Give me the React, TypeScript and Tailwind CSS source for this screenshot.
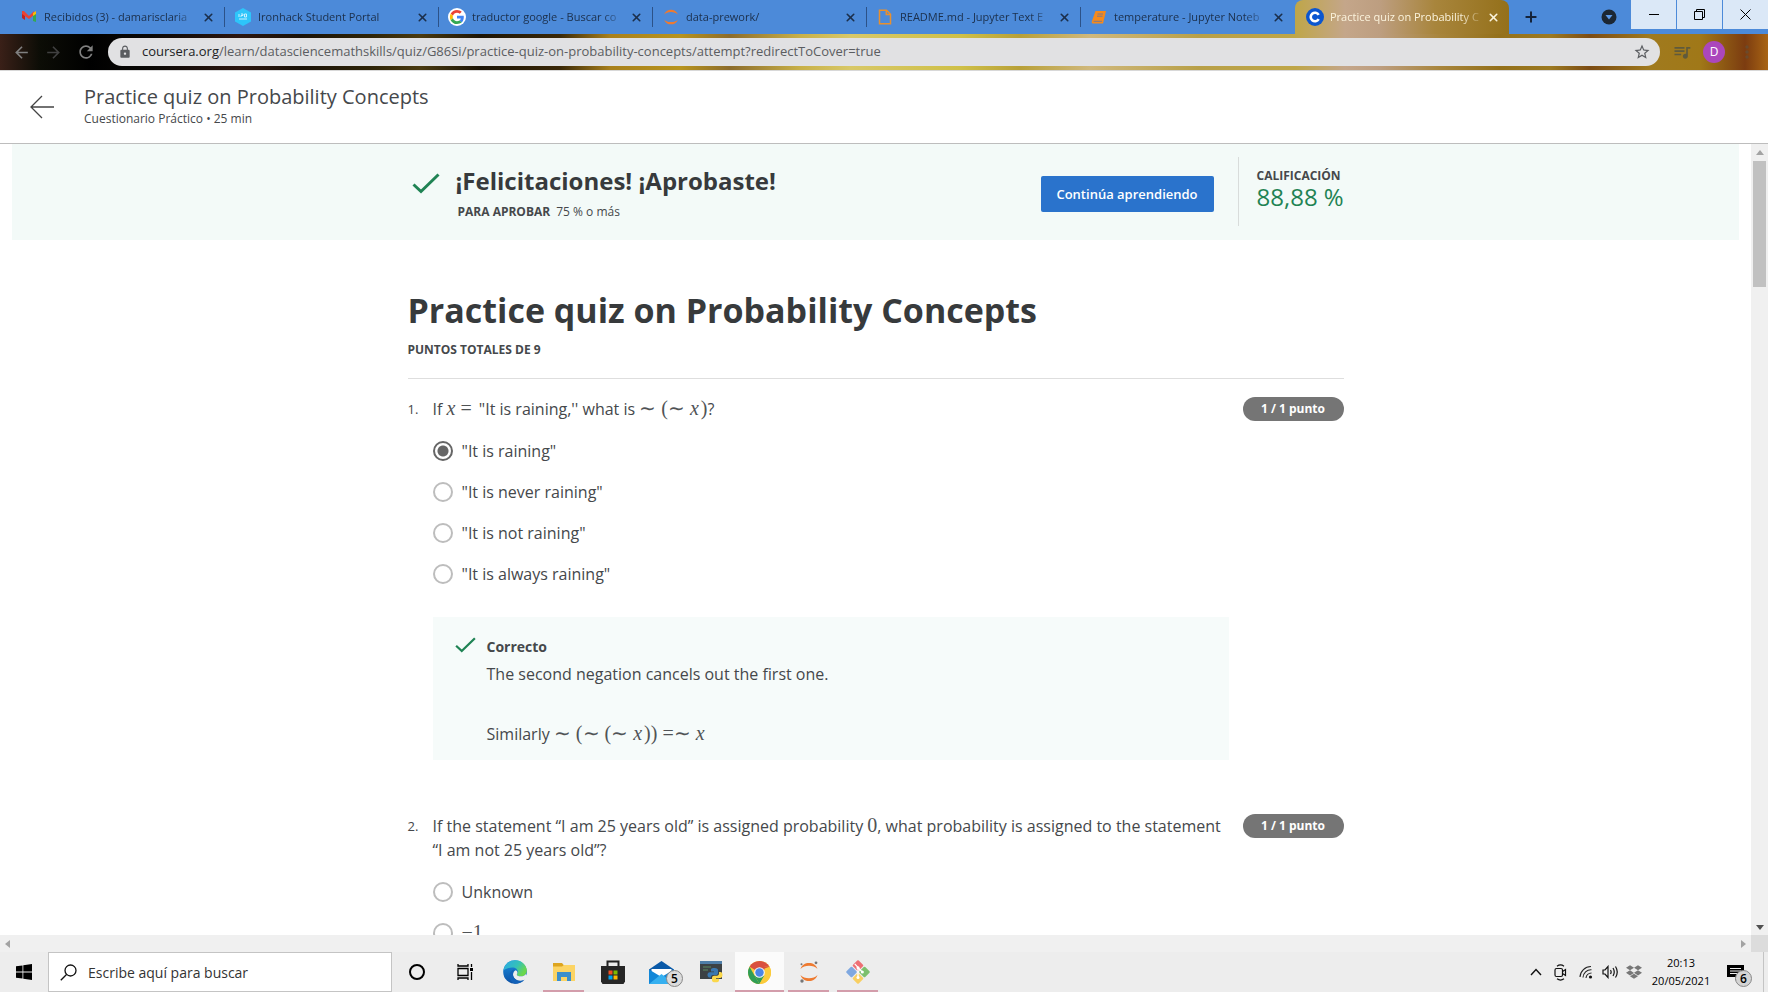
import type { ReactNode } from "react";
import { X, Plus } from "lucide-react";
import { MdLock, MdRefresh, MdStarBorder, MdQueueMusic, MdMoreVert, MdArrowBack, MdArrowForward } from "react-icons/md";
import { FaDropbox } from "react-icons/fa";

const photo =
  "bg-[linear-gradient(90deg,#3a2018_0px,#0c0d06_40px,#000000_90px,#0a0806_150px,#2c1610_240px,#1a1208_300px,#2e2408_370px,#4a3a10_420px,#1c1406_480px,#3a2808_560px,#a8801c_610px,#b8941e_680px,#8c6c2c_730px,#c8b048_800px,#d8c868_850px,#cfc048_960px,#b8a038_1020px,#d0b87c_1090px,#b8a048_1200px,#bfa648_1295px,#c4a68a_1345px,#bd9e80_1380px,#a8853c_1440px,#94701a_1500px,#9c7a22_1550px,#7c4c14_1590px,#a07a1e_1650px,#a07818_1700px,#7c3c10_1745px,#a86414_1768px)]";

function Gmail() {
  return (
    <svg width="16" height="14" viewBox="0 0 16 14">
      <path d="M1 2 4 4v6L1 8z" fill="#c5221f" />
      <path d="M1 1h2l5 5 5-5v4l-5 4-7-5z" fill="#ea4335" />
      <path d="M12 3 15 1v4l-3 2z" fill="#fbbc04" />
      <path d="M12 6 15 4v8l-3-1z" fill="#34a853" />
    </svg>
  );
}
function Ironhack() {
  return (
    <svg width="18" height="18" viewBox="0 0 18 18">
      <path d="M9 0l8 4.500v9L9 18l-8-4.500v-9z" fill="#2dc5fa" />
      <path d="M5 6v3M7 6h2v1.500H7V9M10.500 6h2v3h-2zM5 11h8" stroke="#c8f0ff" strokeWidth="1" fill="none" />
    </svg>
  );
}
function Google() {
  return (
    <svg width="18" height="18" viewBox="0 0 48 48">
      <circle cx="24" cy="24" r="24" fill="#fff" />
      <g transform="translate(5 5) scale(.79)">
        <path fill="#EA4335" d="M24 9.500c3.540 0 6.710 1.220 9.210 3.600l6.850-6.850C35.900 2.380 30.470 0 24 0 14.620 0 6.510 5.380 2.560 13.220l7.980 6.190C12.430 13.720 17.740 9.500 24 9.500z" />
        <path fill="#4285F4" d="M46.980 24.550c0-1.570-.15-3.090-.38-4.550H24v9.020h12.940c-.58 2.960-2.260 5.480-4.780 7.180l7.730 6c4.510-4.180 7.090-10.360 7.090-17.650z" />
        <path fill="#FBBC05" d="M10.530 28.590c-.48-1.450-.76-2.990-.76-4.590s.27-3.140.76-4.590l-7.980-6.190C.92 16.460 0 20.120 0 24c0 3.880.92 7.540 2.560 10.780l7.970-6.190z" />
        <path fill="#34A853" d="M24 48c6.480 0 11.930-2.130 15.890-5.810l-7.730-6c-2.150 1.450-4.920 2.300-8.160 2.300-6.260 0-11.570-4.220-13.470-9.910l-7.980 6.190C6.510 42.620 14.620 48 24 48z" />
      </g>
    </svg>
  );
}
function Jupyter({ dots = false }: { dots?: boolean }) {
  return (
    <svg width={dots ? 22 : 18} height={dots ? 22 : 18} viewBox="0 0 22 22">
      <path d="M2.500 8C4 3.800 7 2 11 2s7 1.800 8.500 6C17.500 5.800 14.500 4.800 11 4.800S4.500 5.800 2.500 8z" fill="#ee7a30" />
      <path d="M2.500 14C4 18.200 7 20 11 20s7-1.800 8.500-6c-2 2.200-5 3.200-8.500 3.200S4.500 16.200 2.500 14z" fill="#ee7a30" />
      {dots && (
        <g fill="#767677">
          <circle cx="18" cy="1.800" r="1.400" />
          <circle cx="4" cy="20" r="1.700" />
          <circle cx="3.500" cy="3.300" r="1" />
        </g>
      )}
    </svg>
  );
}
function FileIcon() {
  return (
    <svg width="14" height="16" viewBox="0 0 14 16" fill="none" stroke="#e8902f" strokeWidth="1.500">
      <path d="M1.500 1.200h7l4 4v9.500h-11z" />
      <path d="M8.300 1.200v4.300h4.200" />
    </svg>
  );
}
function Book() {
  return (
    <svg width="16" height="15" viewBox="0 0 16 15">
      <path d="M4.500 1h10.500l-3 12.500H2C.8 13.500.6 12.500.8 11.500z" fill="#f58a1c" />
      <path d="M6.500 4h5.500M6 6.200h5.500M2.500 11.300h8.500" stroke="#7a7890" strokeWidth="1" />
    </svg>
  );
}
function CourseraMark() {
  return (
    <svg width="18" height="18" viewBox="0 0 18 18">
      <circle cx="9" cy="9" r="9" fill="#0b56d0" />
      <path d="M12.700 11.200A4.300 4.300 0 1 1 12.700 6.800" fill="none" stroke="#fff" strokeWidth="2.600" />
    </svg>
  );
}

const tabs: { title: string; icon: ReactNode }[] = [
  { title: "Recibidos (3) - damarisclaria", icon: <Gmail /> },
  { title: "Ironhack Student Portal", icon: <Ironhack /> },
  { title: "traductor google - Buscar co", icon: <Google /> },
  { title: "data-prework/", icon: <Jupyter /> },
  { title: "README.md - Jupyter Text E", icon: <FileIcon /> },
  { title: "temperature - Jupyter Noteb", icon: <Book /> },
];

function TabStrip() {
  return (
    <div className="flex h-[34px] shrink-0 bg-[#4c8ad9] pl-[11px] text-[11px] text-[#1b2f4b]">
      {tabs.map((t, i) => (
        <div key={t.title} className="flex w-[214px] min-w-0 items-center py-[7px]">
          <span className="ml-[9px] flex w-[18px] shrink-0 justify-center">{t.icon}</span>
          <span className="ml-[6px] flex-1 overflow-hidden whitespace-nowrap [mask-image:linear-gradient(90deg,#000_130px,transparent_154px)]">{t.title}</span>
          <button aria-label="Cerrar pestaña" className="mr-[8px] ml-[4px] flex w-4 justify-center">
            <X size={13} strokeWidth={3} />
          </button>
          <span className={i === tabs.length - 1 ? "w-px" : "h-5 w-px bg-[#2c5288]"} />
        </div>
      ))}
      <div className="flex w-[214px] min-w-0 items-center rounded-t-lg bg-[linear-gradient(90deg,#bfa648,#c4a68a_50px,#bd9e80_85px,#a8853c_140px,#94701a)] text-[#fbf3dc]">
        <span className="ml-[11px] shrink-0"><CourseraMark /></span>
        <span className="ml-[6px] flex-1 overflow-hidden whitespace-nowrap [mask-image:linear-gradient(90deg,#000_130px,transparent_154px)]">Practice quiz on Probability C</span>
        <button aria-label="Cerrar pestaña" className="mr-[8px] ml-[4px] flex w-4 justify-center">
          <X size={13} strokeWidth={3} />
        </button>
      </div>
      <button aria-label="Nueva pestaña" className="ml-[14px] text-[#14233a]"><Plus size={16} strokeWidth={3} /></button>
      <div className="ml-auto flex items-start gap-px text-black">
        <button aria-label="Buscar pestañas" className="mr-[13px] self-center">
          <svg width="16" height="16" viewBox="0 0 16 16"><circle cx="8" cy="8" r="7.500" fill="#1c2733" /><path d="M4.500 6h7L8 10.500z" fill="#5b9ae8" /></svg>
        </button>
        <button aria-label="Minimizar" className="flex h-[29px] w-[45px] items-center justify-center bg-[#dbe8f7]"><span className="h-px w-[10px] bg-black" /></button>
        <button aria-label="Restaurar" className="flex h-[29px] w-[45px] items-center justify-center bg-[#dbe8f7]">
          <svg width="11" height="11" viewBox="0 0 11 11" fill="none" stroke="#000"><path d="M.5 2.500h8v8h-8zM2.500 2.500v-2h8v8h-2" /></svg>
        </button>
        <button aria-label="Cerrar" className="flex h-[29px] w-[45px] items-center justify-center bg-[#dbe8f7]">
          <svg width="11" height="11" viewBox="0 0 11 11" stroke="#000"><path d="M.5.5l10 10M10.500.5l-10 10" /></svg>
        </button>
      </div>
    </div>
  );
}

function Toolbar() {
  return (
    <div className={`flex h-9 shrink-0 items-center pl-[12px] ${photo}`}>
      <button aria-label="Atrás" className="text-[#808080]"><MdArrowBack size={19} /></button>
      <button aria-label="Adelante" className="ml-[13px] text-[#404040]"><MdArrowForward size={19} /></button>
      <button aria-label="Recargar" className="ml-[13px] text-[#808080]"><MdRefresh size={20} /></button>
      <div className="ml-[12px] flex h-7 flex-1 items-center rounded-full bg-[#e1e1e3] pr-[9px] pl-[10px] text-[13px] text-[#5b5d61]">
        <MdLock size={14} />
        <span className="ml-[10px] flex-1 whitespace-nowrap">
          <span className="text-[#202124]">coursera.org</span>/learn/datasciencemathskills/quiz/G86Si/practice-quiz-on-probability-concepts/attempt?redirectToCover=true
        </span>
        <button aria-label="Marcador"><MdStarBorder size={18} /></button>
      </div>
      <button aria-label="Lista" className="ml-[12px] text-[#5f5a3c]"><MdQueueMusic size={20} /></button>
      <button className="ml-[11px] size-[22px] rounded-full bg-[#ab47bc] text-[12px] text-white">D</button>
      <button aria-label="Menú" className="mr-[11px] ml-[12px] text-[#6b4a2c]"><MdMoreVert size={20} /></button>
    </div>
  );
}

function Check({ size }: { size: "lg" | "sm" }) {
  return (
    <svg className={size === "lg" ? "h-[21px] w-[28px]" : "h-[16px] w-[21px]"} viewBox="0 0 28 21" fill="none" stroke="#1f8354" strokeWidth="3">
      <path d="M1.500 11.500 9 18.500 26.500 1.500" />
    </svg>
  );
}

function M({ children, kind = "plain" }: { children: ReactNode; kind?: "plain" | "variable" | "relation" }) {
  const styles = {
    plain: "font-['Liberation_Serif',serif] text-[20px] leading-none text-[#505356]",
    variable: "pr-[2px] font-['Liberation_Serif',serif] text-[20px] leading-none text-[#505356] italic",
    relation: "px-[3px] font-['Liberation_Serif',serif] text-[20px] leading-none text-[#505356]",
  };
  return <span className={styles[kind]}>{children}</span>;
}

function Choice({ name, checked, children }: { name: string; checked?: boolean; children: ReactNode }) {
  return (
    <label className="flex h-[41px] items-center gap-[9px]">
      <input
        type="radio"
        name={name}
        defaultChecked={checked}
        className="size-5 shrink-0 appearance-none rounded-full border-2 border-[#bdbdbd] bg-white checked:border-[#666] checked:bg-[radial-gradient(circle,#666_5px,#fff_6px)]"
      />
      <span className="pt-px">{children}</span>
    </label>
  );
}

function Question({ n, prompt, children }: { n: number; prompt: ReactNode; children: ReactNode }) {
  return (
    <section className="flex items-start">
      <span className="w-[25px] shrink-0 text-[13px] leading-6">{n}.</span>
      <div className="min-w-0 flex-1">
        <p className="leading-6">{prompt}</p>
        <div className="mt-[9px]">{children}</div>
      </div>
      <span className="ml-[14px] w-[101px] shrink-0 rounded-full bg-[#757575] text-center text-[12px] leading-6 font-bold text-white">1 / 1 punto</span>
    </section>
  );
}

function Arrow({ dir, dark }: { dir: "up" | "down" | "left" | "right"; dark?: boolean }) {
  const d = { up: "M0 6 4 1l4 5z", down: "M0 2 4 7l4-5z", left: "M6 0 1 4l5 4z", right: "M2 0 7 4l-5 4z" }[dir];
  return <svg width="8" height="8" viewBox="0 0 8 8" fill={dark ? "#505050" : "#a3a3a3"}><path d={d} /></svg>;
}

function Page() {
  return (
    <div className="flex min-h-0 flex-1">
      <div className="flex min-w-0 flex-1 flex-col">
        <main className="min-h-0 flex-1 overflow-hidden bg-white text-[16px]">
          <div className="mx-3 h-24 bg-[#f3faf8]">
            <div className="mx-auto flex h-full max-w-[936px] items-start">
              <span className="mt-[29px] ml-[4px]"><Check size="lg" /></span>
              <div className="mt-[21px] ml-[16px]">
                <h2 className="text-[24px] leading-8 font-bold text-[#373a3c]">¡Felicitaciones! ¡Aprobaste!</h2>
                <p className="mt-[5px] pl-[2px] text-[12px] leading-5"><b className="mr-[6px] font-bold">PARA APROBAR</b>75 % o más</p>
              </div>
              <button className="mt-8 ml-auto h-9 w-[173px] rounded-xs bg-[#2a73cc] pt-px text-[13px] font-semibold text-white">Continúa aprendiendo</button>
              <div className="mt-[13px] ml-6 h-[69px] w-[106px] border-l border-[#d8dcdb] pt-[10px] pl-[18px] whitespace-nowrap">
                <div className="text-[12px] leading-[18px] font-bold">CALIFICACIÓN</div>
                <div className="text-[24px] leading-6 text-[#1f8354]">88,88 %</div>
              </div>
            </div>
          </div>
          <div className="mx-auto max-w-[936px] pt-[46px]">
            <h1 className="text-[34px] leading-[48px] font-bold text-[#373a3c]">Practice quiz on Probability Concepts</h1>
            <div className="mt-[6px] border-b border-[#dedede] pb-[18px] text-[12px] leading-5 font-bold">PUNTOS TOTALES DE 9</div>
            <div className="mt-[18px]">
              <Question n={1} prompt={<>If <M kind="variable">x</M><M kind="relation">=</M> "It is raining,'' what is <M>∼ (∼ </M><M kind="variable">x</M><M>)</M>?</>}>
                <Choice name="q1" checked>"It is raining"</Choice>
                <Choice name="q1">"It is never raining"</Choice>
                <Choice name="q1">"It is not raining"</Choice>
                <Choice name="q1">"It is always raining"</Choice>
                <div className="mt-[23px] flex h-[143px] bg-[#f6fbfa] pt-[20px] pl-[22px]">
                  <Check size="sm" />
                  <div className="ml-[11px] leading-6">
                    <div className="text-[14px] leading-5 font-bold">Correcto</div>
                    <p className="mt-[5px]">The second negation cancels out the first one.</p>
                    <p className="mt-9">Similarly <M>∼ (∼ (∼ </M><M kind="variable">x</M><M>)) =∼ </M><M kind="variable">x</M></p>
                  </div>
                </div>
              </Question>
            </div>
            <div className="mt-[54px]">
              <Question n={2} prompt={<>If the statement “I am 25 years old” is assigned probability <M>0</M>, what probability is assigned to the statement “I am not 25 years old”?</>}>
                <Choice name="q2">Unknown</Choice>
                <Choice name="q2"><M>−1</M></Choice>
              </Question>
            </div>
          </div>
        </main>
        <div className="flex h-[17px] shrink-0 items-center justify-between bg-[#f0f0f0] px-[4px]"><Arrow dir="left" /><Arrow dir="right" /></div>
      </div>
      <div className="flex w-[17px] shrink-0 flex-col items-center bg-[#f0f0f0]">
        <div className="flex h-[17px] items-center"><Arrow dir="up" /></div>
        <div className="h-[126px] w-[13px] bg-[#c1c1c1]" />
        <div className="mt-auto flex h-[17px] items-center"><Arrow dir="down" dark /></div>
        <div className="h-[17px] w-full bg-[#dcdcdc]" />
      </div>
    </div>
  );
}

function CountBadge({ children }: { children: ReactNode }) {
  return <span className="absolute top-[18px] left-[29px] size-[17px] rounded-full border border-[#888] bg-[#dcdcdc] text-center text-[12px] leading-[15px] font-semibold text-black">{children}</span>;
}

function TaskButton({ label, line, active, children }: { label: string; line?: boolean; active?: boolean; children: ReactNode }) {
  return (
    <button aria-label={label} className={active ? "relative flex w-[49px] items-center justify-center bg-[#fbfbfb]" : "relative flex w-[49px] items-center justify-center"}>
      {children}
      {line && <span className={active ? "absolute inset-x-0 bottom-0 h-[2px] bg-[#d39dab]" : "absolute inset-x-[4px] bottom-0 h-[2px] bg-[#d39dab]"} />}
    </button>
  );
}

function Taskbar() {
  return (
    <div className="flex h-10 shrink-0 items-stretch bg-[#ededed] text-black">
      <button aria-label="Inicio" className="flex w-12 items-center justify-center">
        <svg width="16" height="16" viewBox="0 0 16 16"><path d="M0 2.300 6.500 1.400v6.200H0zM7.300 1.300 16 0v7.600H7.300zM0 8.400h6.500v6.200L0 13.700zM7.300 8.400H16V16l-8.700-1.300z" /></svg>
      </button>
      <label className="flex w-[344px] items-center border border-[#c4c4c4] bg-white pl-[11px]">
        <svg width="17" height="17" viewBox="0 0 17 17" fill="none" stroke="#111" strokeWidth="1.300"><circle cx="10.500" cy="6.500" r="5.500" /><path d="M6.500 10.500.8 16.200" /></svg>
        <input aria-label="Buscar" placeholder="Escribe aquí para buscar" className="ml-[11px] min-w-0 flex-1 text-[14px] outline-none placeholder:text-[#333] placeholder:opacity-100" />
      </label>
      <TaskButton label="Cortana"><span className="size-4 rounded-full border-2 border-black" /></TaskButton>
      <TaskButton label="Vista de tareas">
        <svg width="17" height="16" viewBox="0 0 17 16" fill="none" stroke="#000" strokeWidth="1.300"><path d="M1 4.500h10v7H1zM1 0v2h10V0M1 16v-2h10v2M14.500 0v3M14.500 8v8" /><path d="M13 4h3v3h-3z" fill="#000" stroke="none" /></svg>
      </TaskButton>
      <TaskButton label="Edge">
        <svg width="24" height="24" viewBox="0 0 24 24">
          <defs>
            <linearGradient id="ea" x1="0" y1="0" x2="1" y2=".5"><stop offset="0" stopColor="#2aa8e8" /><stop offset=".6" stopColor="#35c1b8" /><stop offset="1" stopColor="#6cd84a" /></linearGradient>
            <linearGradient id="eb" x1="0" y1="0" x2="0" y2="1"><stop offset="0" stopColor="#1b8fe0" /><stop offset="1" stopColor="#0c50a4" /></linearGradient>
          </defs>
          <circle cx="12" cy="12" r="11.800" fill="url(#eb)" />
          <path d="M.4 10.500C1.500 4 6.500.2 12 .2c6.800 0 11.800 5 11.800 10.300 0 3.500-2.600 5.800-6 5.800-2.500 0-4-.9-4-1.800 0-.7 1-1.200 1-2.800 0-2-2-4.200-5.600-4.200-4 0-7.500 1.800-8.800 3z" fill="url(#ea)" />
          <path d="M13.800 14.500c-.2.900 1.500 1.800 4 1.800 2.200 0 4-.9 5-2.300l1.200 2-2 3.500c-1.500.9-3 1.200-4.500 1.200-4.500 0-7.500-3-7.500-6.200 0-1.800 1-3.400 2.700-4.200 2 .9 2.200 2.400 1.100 4.200z" fill="#ededed" />
          <path d="M10 14.500c0 3.700 3.500 6.700 7.500 6.500 1.600-.1 3-.5 4-1.200-2 2.600-5.500 4-9.500 4C8 22.500 6.500 19 6.500 16c0-3.500 2-6 5-6.800-1 1.200-1.500 3-1.500 5.300z" fill="#1261b8" />
        </svg>
      </TaskButton>
      <TaskButton label="Explorador" line>
        <svg width="22" height="20" viewBox="0 0 22 20"><path d="M0 1h9l2 2.500V6H0z" fill="#dda520" /><path d="M0 4.500h9L11 3h11v16H0z" fill="#fcd464" /><path d="M4 10h14v9h-4v-4H8v4H4z" fill="#3c8fcb" /></svg>
      </TaskButton>
      <TaskButton label="Store">
        <svg width="24" height="24" viewBox="0 0 24 24"><path d="M6.500 7V1.500h11V7" fill="none" stroke="#222" strokeWidth="2" /><path d="M0 6h24v15.500L22.500 24h-21L0 21.500z" fill="#262626" /><path d="M7.500 10.500h4v4h-4z" fill="#f25022" /><path d="M12.500 10.500h4v4h-4z" fill="#7fba00" /><path d="M7.500 15.500h4v4h-4z" fill="#00a4ef" /><path d="M12.500 15.500h4v4h-4z" fill="#ffb900" /></svg>
      </TaskButton>
      <TaskButton label="Correo">
        <svg width="25" height="23" viewBox="0 0 25 23"><path d="M0 8.500 12.500 0 25 8.500V12H0z" fill="#0a5aa8" /><path d="M2.500 8h20v9h-20z" fill="#fff" /><path d="M0 8.500 12.500 16 25 8.500V23H0z" fill="#1287d8" /><path d="M0 23 12.500 13 25 23z" fill="#36b0f0" /></svg>
        <CountBadge>5</CountBadge>
      </TaskButton>
      <TaskButton label="IDLE">
        <svg width="24" height="24" viewBox="0 0 24 24"><path d="M1 1h22v18H1z" fill="#3c4144" /><path d="M1 1h22v3H1z" fill="#4f7ea8" /><path d="M4 7h8M4 10h5" stroke="#5c8c60" /><path d="M12 9.500c0-1 1-1.500 3.500-1.500S19 9 19 10v3c0 1.500-1 2-2 2h-3c-1.500 0-2 1-2 2.500h-1.500C9 17.500 8.500 16 8.500 14.800s.7-2.600 2.500-2.600h4v-.7h-3z" fill="#3a78b0" /><path d="M20 12h1.500c1.500 0 2 1.500 2 3s-.8 3-2.300 3H17v.7h3v1.800c0 1-1 1.800-3.500 1.800s-3.500-.8-3.500-1.800v-2.800c0-1.300 1-2 2-2h3c1.300 0 2-1 2-2.200z" fill="#fbd84b" /></svg>
      </TaskButton>
      <TaskButton label="Chrome" line active>
        <svg width="23" height="23" viewBox="0 0 24 24">
          <circle cx="12" cy="12" r="12" fill="#fbcb3c" />
          <path d="M12 12 1.610 6A12 12 0 0 1 22.390 6z" fill="#d9503f" />
          <path d="M1.610 6 6.800 15 12 24A12 12 0 0 1 1.610 6z" fill="#2f9e56" />
          <path d="M6.800 15 12 24 17.200 15z" fill="#2f9e56" />
          <path d="M12 24 17.200 15V6h5.200A12 12 0 0 1 12 24z" fill="#fbcb3c" />
          <path d="M12 6h10.400L12 10z" fill="#d9503f" />
          <circle cx="12" cy="12" r="5.600" fill="#f4f4f4" /><circle cx="12" cy="12" r="4.400" fill="#4a86e8" />
        </svg>
      </TaskButton>
      <TaskButton label="Jupyter" line><Jupyter dots /></TaskButton>
      <TaskButton label="Git" line>
        <svg width="26" height="26" viewBox="0 0 24 24">
          <g transform="rotate(45 12 12)"><rect x="4" y="4" width="7.500" height="7.500" rx="1" fill="#ee6f74" /><rect x="12.500" y="4" width="7.500" height="7.500" rx="1" fill="#7cc06c" /><rect x="4" y="12.500" width="7.500" height="7.500" rx="1" fill="#7fa8e0" /><rect x="12.500" y="12.500" width="7.500" height="7.500" rx="1" fill="#f8cf62" /></g>
          <path d="M9 4.500 15 11M12 8v9M12 8l4 4" stroke="#fff" strokeWidth="1.200" fill="none" /><circle cx="12" cy="8" r="1.400" fill="#fff" /><circle cx="16" cy="12" r="1.400" fill="#fff" /><circle cx="12" cy="17" r="1.400" fill="#fff" />
        </svg>
      </TaskButton>
      <div className="ml-auto flex items-center">
        <svg className="mr-[12px]" width="12" height="8" viewBox="0 0 12 8" fill="none" stroke="#111" strokeWidth="1.400"><path d="M1 7l5-5.500L11 7" /></svg>
        <svg className="mr-[12px]" width="13" height="17" viewBox="0 0 13 17" fill="none" stroke="#111" strokeWidth="1.200"><rect x="1" y="4.500" width="7.500" height="8" rx="1.500" /><path d="M8.500 7.500 11.500 5.500v6l-3-2M3 2.200C5 .8 8 .8 10 2.200M3 14.800c2 1.400 5 1.400 7 0" /></svg>
        <svg className="mr-[9px]" width="14" height="14" viewBox="0 0 14 14" fill="none" stroke="#222" strokeWidth="1.100"><path d="M1 12A11 11 0 0 1 12 1.500M4 12.500A8 8 0 0 1 12.500 4.700M7 13a5.500 5.500 0 0 1 5.500-5" /><circle cx="11.500" cy="12" r="1.600" fill="#111" stroke="none" /></svg>
        <svg className="mr-[7px]" width="17" height="14" viewBox="0 0 17 14" fill="none" stroke="#111" strokeWidth="1.200"><path d="M1 5h2l3-3.500v11L3 9H1zM8.500 5q1.300 2 0 4M11 3q2.500 4 0 8M13.500 1.500q3.500 5.500 0 11" /></svg>
        <FaDropbox size={16} className="mr-[9px] text-[#777]" />
        <div className="w-[60px] text-center text-[11px] leading-[18px] whitespace-nowrap">20:13<br />20/05/2021</div>
        <button aria-label="Notificaciones" className="relative ml-[16px] flex h-10 w-[36px] items-center">
          <svg width="17" height="17" viewBox="0 0 17 17"><path d="M0 1h17v12h-5l-3.500 3.500V13H0z" /><path d="M3 4.500h11M3 7h11M3 9.500h8" stroke="#ededed" strokeWidth="1" /></svg>
          <span className="absolute top-[18px] left-[8px] size-[17px] rounded-full border border-[#888] bg-[#d4d4d4] text-center text-[12px] leading-[15px] font-semibold">6</span>
        </button>
        <span className="mr-[4px] h-10 w-px bg-[#c4c4c4]" />
      </div>
    </div>
  );
}

export default function App() {
  return (
    <div className="flex h-screen flex-col overflow-hidden bg-white font-['Open_Sans','Noto_Sans',sans-serif] text-[#45484b]">
      <TabStrip />
      <Toolbar />
      <header className="flex h-[74px] shrink-0 items-center border-t border-b border-t-[#d8d8d8] border-b-[#bdbdbd]">
        <a href="#volver" aria-label="Volver" className="ml-[30px]">
          <svg width="24" height="24" viewBox="0 0 24 24" fill="none" stroke="#444" strokeWidth="1.300"><path d="M24 12H1M12 1 1 12l11 11" /></svg>
        </a>
        <div className="ml-[30px]">
          <div className="text-[20px] leading-6">Practice quiz on Probability Concepts</div>
          <div className="text-[12px] leading-5">Cuestionario Práctico • 25 min</div>
        </div>
      </header>
      <Page />
      <Taskbar />
    </div>
  );
}
